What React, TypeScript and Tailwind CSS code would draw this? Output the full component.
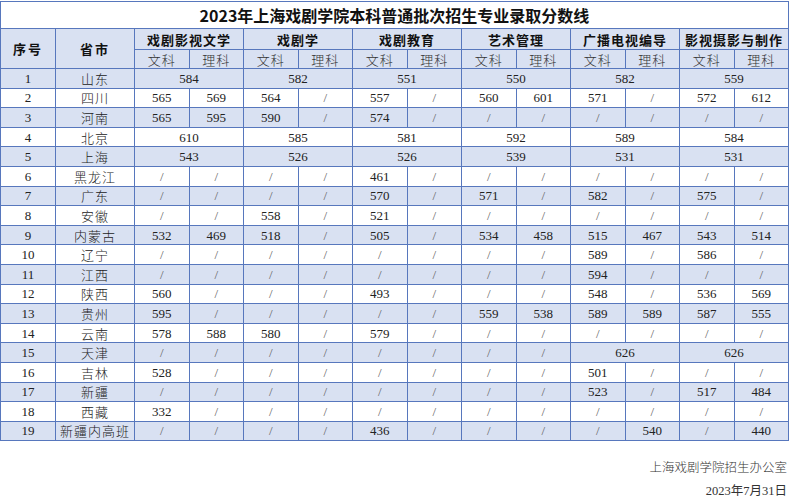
import { Fragment } from "react";

type Cell = string | [string, number];

const majors = [
  "戏剧影视文学",
  "戏剧学",
  "戏剧教育",
  "艺术管理",
  "广播电视编导",
  "影视摄影与制作",
];

const S = "/";

const rows: { prov: string; cells: Cell[] }[] = [
  { prov: "山东", cells: [["584", 2], ["582", 2], ["551", 2], ["550", 2], ["582", 2], ["559", 2]] },
  { prov: "四川", cells: ["565", "569", "564", S, "557", S, "560", "601", "571", S, "572", "612"] },
  { prov: "河南", cells: ["565", "595", "590", S, "574", S, S, S, S, S, S, S] },
  { prov: "北京", cells: [["610", 2], ["585", 2], ["581", 2], ["592", 2], ["589", 2], ["584", 2]] },
  { prov: "上海", cells: [["543", 2], ["526", 2], ["526", 2], ["539", 2], ["531", 2], ["531", 2]] },
  { prov: "黑龙江", cells: [S, S, S, S, "461", S, S, S, S, S, S, S] },
  { prov: "广东", cells: [S, S, S, S, "570", S, "571", S, "582", S, "575", S] },
  { prov: "安徽", cells: [S, S, "558", S, "521", S, S, S, S, S, S, S] },
  { prov: "内蒙古", cells: ["532", "469", "518", S, "505", S, "534", "458", "515", "467", "543", "514"] },
  { prov: "辽宁", cells: [S, S, S, S, S, S, S, S, "589", S, "586", S] },
  { prov: "江西", cells: [S, S, S, S, S, S, S, S, "594", S, S, S] },
  { prov: "陕西", cells: ["560", S, S, S, "493", S, S, S, "548", S, "536", "569"] },
  { prov: "贵州", cells: ["595", S, S, S, S, S, "559", "538", "589", "589", "587", "555"] },
  { prov: "云南", cells: ["578", "588", "580", S, "579", S, S, S, S, S, S, S] },
  { prov: "天津", cells: [S, S, S, S, S, S, S, S, ["626", 2], ["626", 2]] },
  { prov: "吉林", cells: ["528", S, S, S, S, S, S, S, "501", S, S, S] },
  { prov: "新疆", cells: [S, S, S, S, S, S, S, S, "523", S, "517", "484"] },
  { prov: "西藏", cells: ["332", S, S, S, S, S, S, S, S, S, S, S] },
  { prov: "新疆内高班", cells: [S, S, S, S, "436", S, S, S, S, "540", S, "440"] },
];

const border = "border border-[#5777bd]";

export default function App() {
  return (
    <div className="h-[500px] w-[789px] overflow-hidden bg-white font-['Liberation_Serif','Noto_Sans_CJK_SC',serif] text-[#222]">
      <table className="mt-px table-fixed border-collapse">
        <colgroup>
          <col className="w-[55px]" />
          <col className="w-[79px]" />
          {Array.from({ length: 12 }).map((_, i) => (
            <col key={i} className="w-[54.5px]" />
          ))}
        </colgroup>
        <tbody>
          <tr>
            <td
              colSpan={14}
              className={`${border} h-[27px] bg-white p-0 text-center font-['Noto_Sans_CJK_SC',sans-serif] text-[16px] font-bold leading-none text-[#111]`}
            >
              2023年上海戏剧学院本科普通批次招生专业录取分数线
            </td>
          </tr>
          <tr className="bg-[#d9e1f2] font-['Noto_Sans_CJK_SC',sans-serif] text-[13px] leading-none text-[#111]">
            <td rowSpan={2} className={`${border} p-0 text-center font-bold tracking-[2px]`}>
              序号
            </td>
            <td rowSpan={2} className={`${border} p-0 text-center font-bold tracking-[2px]`}>
              省市
            </td>
            {majors.map((m) => (
              <td key={m} colSpan={2} className={`${border} h-[21px] p-0 text-center font-bold tracking-[1px]`}>
                {m}
              </td>
            ))}
          </tr>
          <tr className="bg-[#d9e1f2] font-['Noto_Sans_CJK_SC',sans-serif] text-[13px] leading-none text-[#333]">
            {majors.map((m) => (
              <Fragment key={m}>
                <td className={`${border} h-[19px] p-0 text-center font-light tracking-[1px]`}>文科</td>
                <td className={`${border} h-[19px] p-0 text-center font-light tracking-[1px]`}>理科</td>
              </Fragment>
            ))}
          </tr>
          {rows.map((r, i) => (
            <tr key={r.prov} className={i % 2 === 0 ? "bg-[#d9e1f2]" : "bg-white"}>
              <td className={`${border} h-[19.6px] p-0 text-center text-[13px] leading-none`}>{i + 1}</td>
              <td className={`${border} p-0 text-center font-['Noto_Sans_CJK_SC',sans-serif] text-[13px] font-light leading-none tracking-[1px]`}>
                {r.prov}
              </td>
              {r.cells.map((c, j) => {
                const text = Array.isArray(c) ? c[0] : c;
                const span = Array.isArray(c) ? c[1] : 1;
                return (
                  <td
                    key={j}
                    colSpan={span}
                    className={`${border} p-0 text-center text-[13px] leading-none ${text === S ? "text-[#666]" : ""}`}
                  >
                    {text}
                  </td>
                );
              })}
            </tr>
          ))}
        </tbody>
      </table>
      <div className="mt-[18px] flex flex-col items-end pr-[2px] text-[12.5px] leading-[16px] text-[#333]">
        <div className="font-['Noto_Sans_CJK_SC',sans-serif] font-light">上海戏剧学院招生办公室</div>
        <div className="mt-[8px]">2023年7月31日</div>
      </div>
    </div>
  );
}
